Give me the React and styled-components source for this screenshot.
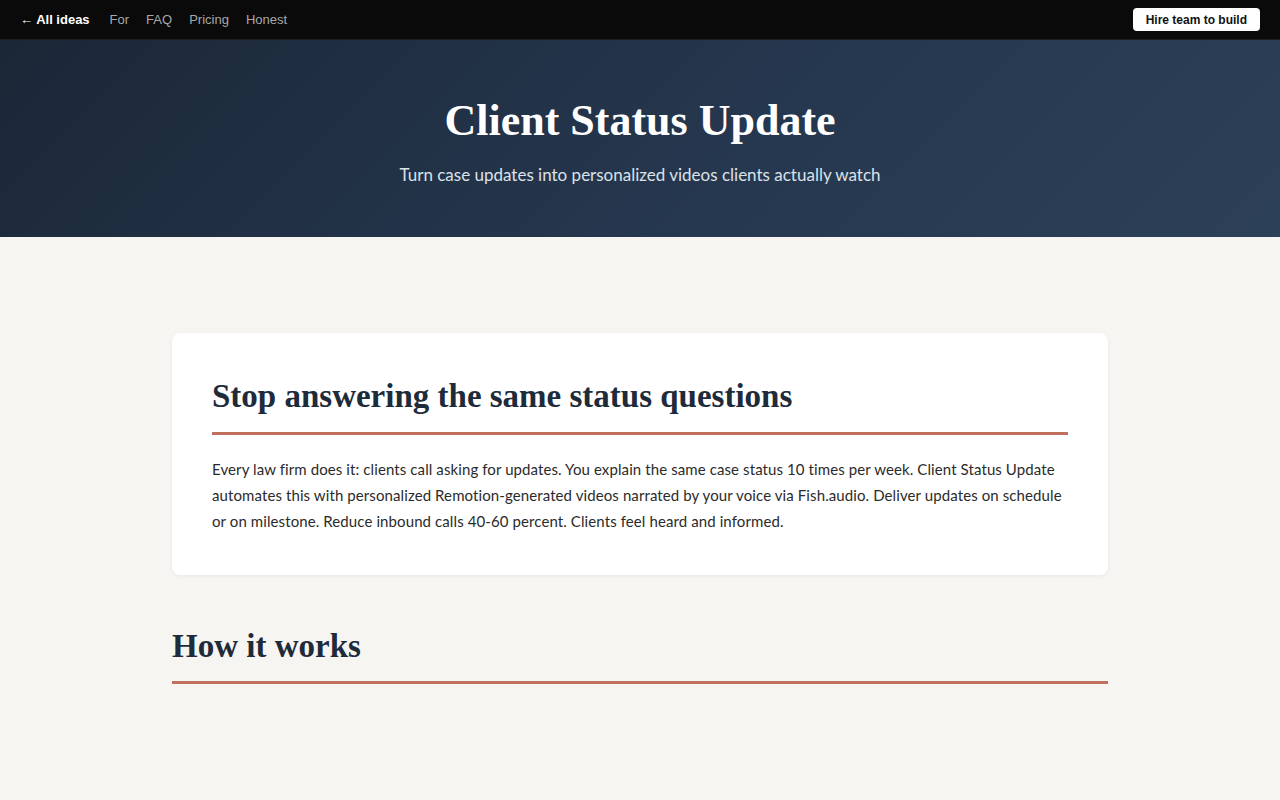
import React from "react";
import styled, { createGlobalStyle } from "styled-components";

const Global = createGlobalStyle`
  body {
    margin: 0;
    background: #f7f5f1;
    font-family: "Source Sans Pro", Lato, "Noto Sans", sans-serif;
  }
`;

const Nav = styled.nav`
  height: 39px;
  background: #0a0a0a;
  border-bottom: 1px solid #1f1f1f;
  display: flex;
  align-items: center;
  justify-content: space-between;
  padding: 0 20px;
  font-family: "Liberation Sans", Arial, sans-serif;
  font-size: 13px;
`;

const NavLeft = styled.div`
  display: flex;
  align-items: center;
  gap: 17px;
`;

const NavLink = styled.a`
  color: ${(p) => (p.$strong ? "#ffffff" : "#a8a8a8")};
  font-weight: ${(p) => (p.$strong ? 700 : 400)};
  text-decoration: none;
  margin-right: ${(p) => (p.$strong ? "3px" : "0")};
`;

const HireButton = styled.button`
  background: #ffffff;
  color: #111;
  border: none;
  border-radius: 4px;
  height: 23px;
  padding: 0 13px;
  font-family: "Liberation Sans", Arial, sans-serif;
  font-size: 12px;
  font-weight: 700;
`;

const Hero = styled.header`
  height: 194px;
  padding-top: 3px;
  background: linear-gradient(135deg, #1b2737 0%, #263850 60%, #2c4058 100%);
  display: flex;
  flex-direction: column;
  align-items: center;
  justify-content: center;
  color: #fff;
`;

const HeroTitle = styled.h1`
  margin: 0 0 16px;
  font-family: "Liberation Serif", "Times New Roman", serif;
  font-size: 44px;
  font-weight: 700;
  line-height: 1.2;
`;

const HeroSub = styled.p`
  margin: 0;
  font-size: 17px;
  color: #dbe2ea;
`;

const Main = styled.main`
  width: 936px;
  margin: 0 auto;
  padding: 96px 0 80px;
`;

const Card = styled.section`
  background: #fff;
  border-radius: 8px;
  box-shadow: 0 1px 4px rgba(0, 0, 0, 0.06);
  padding: 44px 40px 41px;
  margin-bottom: 52px;
`;

const SectionTitle = styled.h2`
  margin: 0;
  padding-bottom: 15px;
  border-bottom: 3px solid #c0705c;
  font-family: "Liberation Serif", "Times New Roman", serif;
  font-size: 33px;
  font-weight: 700;
  line-height: 1.2;
  color: #1e2b3a;
`;

const Body = styled.p`
  margin: 21px 0 0;
  font-size: 15px;
  letter-spacing: 0.1px;
  line-height: 26px;
  color: #2b2b2b;
`;

export default function App() {
  return (
    <>
      <Global />
      <Nav>
        <NavLeft>
          <NavLink $strong href="#">← All ideas</NavLink>
          <NavLink href="#">For</NavLink>
          <NavLink href="#">FAQ</NavLink>
          <NavLink href="#">Pricing</NavLink>
          <NavLink href="#">Honest</NavLink>
        </NavLeft>
        <HireButton>Hire team to build</HireButton>
      </Nav>
      <Hero>
        <HeroTitle>Client Status Update</HeroTitle>
        <HeroSub>Turn case updates into personalized videos clients actually watch</HeroSub>
      </Hero>
      <Main>
        <Card>
          <SectionTitle>Stop answering the same status questions</SectionTitle>
          <Body>
            Every law firm does it: clients call asking for updates. You explain the same case
            status 10 times per week. Client Status Update automates this with personalized
            Remotion-generated videos narrated by your voice via Fish.audio. Deliver updates on
            schedule or on milestone. Reduce inbound calls 40-60 percent. Clients feel heard and
            informed.
          </Body>
        </Card>
        <SectionTitle>How it works</SectionTitle>
      </Main>
    </>
  );
}
